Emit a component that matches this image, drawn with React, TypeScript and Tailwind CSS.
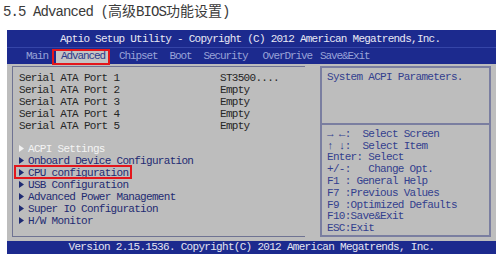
const MONO = { fontFamily: '"Liberation Mono", "DejaVu Sans Mono", monospace' };

// [label, left margin]
const tabs: [string, number][] = [
  ['Main', 0],
  ['Advanced', 8],
  ['Chipset', 9],
  ['Boot', 12],
  ['Security', 12],
  ['OverDrive', 15],
  ['Save&Exit', 8],
];

const ports = [
  ['Serial ATA Port 1', 'ST3500....'],
  ['Serial ATA Port 2', 'Empty'],
  ['Serial ATA Port 3', 'Empty'],
  ['Serial ATA Port 4', 'Empty'],
  ['Serial ATA Port 5', 'Empty'],
];

const menus = [
  'ACPI Settings',
  'Onboard Device Configuration',
  'CPU configuration',
  'USB Configuration',
  'Advanced Power Management',
  'Super IO Configuration',
  'H/W Monitor',
];

const help = [
  '\u2192 \u2190:  Select Screen',
  '\u2191 \u2193:  Select Item',
  'Enter: Select',
  '+/-:   Change Opt.',
  'F1 : General Help',
  'F7 :Previous Values',
  'F9 :Optimized Defaults',
  'F10:Save&Exit',
  'ESC:Exit',
];

function Arrow({ light }: { light?: boolean }) {
  return (
    <svg width="5" height="7" viewBox="0 0 5 7" className="mr-[4px] shrink-0">
      <path d="M0 0 L5 3.5 L0 7 Z" fill={light ? '#f2f2f2' : '#1f2b72'} />
    </svg>
  );
}

export default function App() {
  return (
    <div className="w-[500px] h-[259px] bg-white relative overflow-hidden">
      {/* Heading */}
      <div
        className="absolute left-[3px] top-[1px] text-[14px] leading-[18px] text-[#3a3a3a] whitespace-pre"
        style={{ fontFamily: '"Liberation Mono", "Noto Sans CJK SC", monospace', letterSpacing: '-0.9px' }}
      >
        5.5 Advanced (<span style={{ fontFamily: '"Noto Sans CJK SC", sans-serif', letterSpacing: 0 }}>高级</span>BIOS<span style={{ fontFamily: '"Noto Sans CJK SC", sans-serif', letterSpacing: 0 }}>功能设置</span>)
      </div>

      {/* BIOS screen */}
      <div className="absolute left-[7px] top-[30px] w-[489px] h-[224px] flex flex-col bg-[#bdbdbd]" style={MONO}>
        <div className="h-[17px] bg-[#1c2a8e] text-[#e8e8f4] text-[11px] leading-[18px] tracking-[-0.75px] pl-[53px] whitespace-pre">
          Aptio Setup Utility - Copyright (C) 2012 American Megatrends,Inc.
        </div>
        <div className="h-[18px] bg-[#1c2a8e] border-t border-[#3545a8] flex items-end text-[11px] leading-[14px] tracking-[-1.1px] pl-[19px] pb-[1px]">
          {tabs.map(([t, ml]) => (
            <span
              key={t}
              style={{ marginLeft: ml }}
              className={
                t === 'Advanced'
                  ? 'bg-[#c4c4c4] text-[#2c3a8c] px-[5px]'
                  : 'text-[#98a2d8]'
              }
            >
              {t}
            </span>
          ))}
        </div>

        <div className="flex-1 flex px-[5px] pt-[2px] pb-[4px]">
          <div className="w-[293px] border-l border-t border-b border-[#6f7392] pl-[6px] pt-[5px] text-[11px] leading-[12px] tracking-[-0.7px]">
            {ports.map(([a, b]) => (
              <div key={a} className="flex text-[#262626] whitespace-pre">
                <span className="w-[201px]">{a}</span>
                <span>{b}</span>
              </div>
            ))}
            <div className="h-[11px]" />
            {menus.map((m, i) => (
              <div key={m} className={`flex items-center whitespace-pre ${i === 0 ? 'text-[#f4f4f4]' : 'text-[#1f2b72]'}`}>
                <Arrow light={i === 0} />
                {m}
              </div>
            ))}
          </div>
          <div className="w-[15px]" />
          <div className="flex-1 flex flex-col border-2 border-[#7a7ea0] text-[11px] tracking-[-0.7px] text-[#33408e]">
            <div className="h-[57px] pl-[5px] pt-[3px] leading-[12px] border-b-2 border-[#7a7ea0]">System ACPI Parameters.</div>
            <div className="pl-[5px] pt-[4px] leading-[11.8px]">
              {help.map((h) => (
                <div key={h} className="whitespace-pre">{h}</div>
              ))}
            </div>
          </div>
        </div>

        <div className="h-[13px] bg-[#1c2a8e] text-[#e4e4f2] text-[11px] leading-[13px] tracking-[-0.7px] text-center whitespace-pre">
          Version 2.15.1536. Copyright(C) 2012 American Megatrends, Inc.
        </div>
      </div>

      {/* Red annotation boxes */}
      <div className="absolute left-[52px] top-[49px] w-[58px] h-[16px] border-2 border-[#e3161b]" />
      <div className="absolute left-[14px] top-[165px] w-[118px] h-[14px] border-2 border-[#e3161b]" />
    </div>
  );
}
